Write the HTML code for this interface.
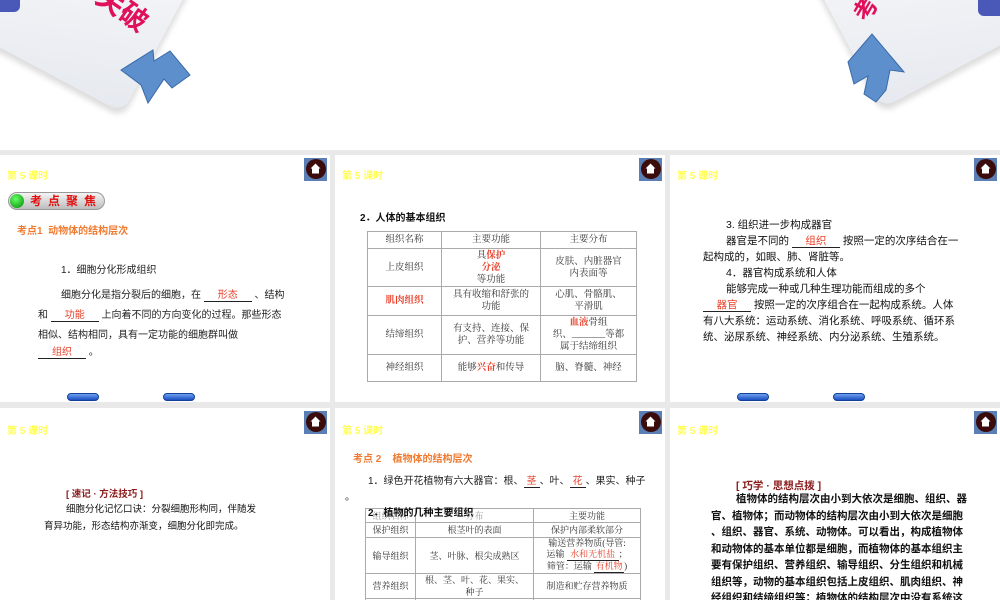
<!DOCTYPE html>
<html><head><meta charset="utf-8"><style>
*{margin:0;padding:0;box-sizing:border-box}
body{width:1000px;height:600px;overflow:hidden;background:#e9e9e9;font-family:"Liberation Sans","Noto Sans CJK SC",sans-serif;position:relative;color:#111}
.top{position:absolute;left:0;top:0;width:1000px;height:150px;background:#fff;overflow:hidden}
.s{position:absolute;background:#fff;overflow:hidden}
.a{position:absolute;white-space:nowrap}
.k{color:#ffff55;font-size:10px;font-weight:bold}
.home{position:absolute;width:23px;height:23px;background:#5b7fb5}
.home:after{content:"";position:absolute;left:2px;top:1px;width:20px;height:20px;border-radius:50%;background:#3a0c0c}
.home svg{position:absolute;left:6px;top:5px;z-index:2}
.nb{position:absolute;width:32px;height:8px;border-radius:4px;background:linear-gradient(#6fa0f0,#1a4fc0);border:1px solid #123f9a}
.t{font-size:10px;color:#222}
.r{color:#e8402a}
.u{display:inline-block;border-bottom:1px solid #222;text-align:center;line-height:11px}
table{position:absolute;border-collapse:collapse;font-family:"Liberation Serif","Noto Serif CJK SC",serif;font-size:9.5px;color:#333}
td{border:1px solid #aaa;text-align:center;vertical-align:middle;line-height:12px;padding:0 2px}
.p{font-size:10.5px;line-height:16.5px;color:#111}
</style></head><body>
<div class="top">
  <div style="position:absolute;left:-40px;top:-78px;width:210px;height:150px;background:linear-gradient(160deg,#fafbfc,#e6e9ef);border-radius:14px;transform:rotate(28deg);box-shadow:3px 5px 6px #ddd"></div>
  <div style="position:absolute;left:-10px;top:-10px;width:30px;height:22px;background:#4a58b8;border-radius:6px"></div>
  <div class="a" style="left:95px;top:-12px;font-size:28px;font-weight:bold;color:#e0105a;transform:rotate(35deg)">关破</div>
  <svg style="position:absolute;left:118px;top:45px" width="76" height="64" viewBox="0 0 76 64"><path d="M3 25 L35 5 L36 16 L52 6 L72 30 L54 43 L46 34 L30 58 L23 40 Z" fill="#5d8fcc" stroke="#3a6aa8"/></svg>
  <div style="position:absolute;left:835px;top:-80px;width:200px;height:150px;background:linear-gradient(200deg,#fafbfc,#e6e9ef);border-radius:14px;transform:rotate(-28deg);box-shadow:-3px 5px 6px #ddd"></div>
  <div style="position:absolute;left:978px;top:-6px;width:30px;height:22px;background:#4a58b8;border-radius:6px"></div>
  <div class="a" style="left:852px;top:-10px;font-size:24px;font-weight:bold;color:#e0105a;transform:rotate(-60deg)">考</div>
  <svg style="position:absolute;left:846px;top:32px" width="62" height="72" viewBox="0 0 62 72"><path d="M2 30 L26 2 L58 40 L44 38 L40 58 L30 70 L18 62 L22 44 L8 52 Z" fill="#5d8fcc" stroke="#3a6aa8"/></svg>
</div>

<!-- slide 1 -->
<div class="s" style="left:0;top:155px;width:330px;height:247px">
  <div class="a k" style="left:7px;top:12px">第 5 课时</div>
  <div class="home" style="left:304px;top:3px"><svg width="11" height="11" viewBox="0 0 11 11"><path d="M5.5 0.5 L10.5 5.5 L9 5.5 L9 10.5 L2 10.5 L2 5.5 L0.5 5.5 Z" fill="#fff"/></svg></div>
  <div style="position:absolute;left:8px;top:37px;width:97px;height:18px;border-radius:9px;background:linear-gradient(#f4f4f4,#bdbdbd);border:1px solid #999"></div>
  <div style="position:absolute;left:10px;top:39px;width:14px;height:14px;border-radius:50%;background:radial-gradient(circle at 40% 35%,#6f6,#080)"></div>
  <div class="a" style="left:30px;top:37px;font-size:12px;font-weight:bold;color:#e01010;letter-spacing:6px">考点聚焦</div>
  <div class="a" style="left:17px;top:67px;font-size:10px;font-weight:bold;color:#f07a30">考点1&nbsp; 动物体的结构层次</div>
  <div class="a t" style="left:61px;top:106px">1．细胞分化形成组织</div>
  <div class="a t" style="left:61px;top:131px">细胞分化是指分裂后的细胞，在 <span class="u r" style="width:48px">形态</span> 、结构</div>
  <div class="a t" style="left:38px;top:151px">和 <span class="u r" style="width:48px">功能</span> 上向着不同的方向变化的过程。那些形态</div>
  <div class="a t" style="left:38px;top:171px">相似、结构相同，具有一定功能的细胞群叫做</div>
  <div class="a t" style="left:38px;top:188px"><span class="u r" style="width:48px">组织</span> 。</div>
  <div class="nb" style="left:67px;top:238px"></div><div class="nb" style="left:163px;top:238px"></div>
</div>

<!-- slide 2 -->
<div class="s" style="left:335px;top:155px;width:330px;height:247px">
  <div class="a k" style="left:7px;top:12px">第 5 课时</div>
  <div class="home" style="left:304px;top:3px"><svg width="11" height="11" viewBox="0 0 11 11"><path d="M5.5 0.5 L10.5 5.5 L9 5.5 L9 10.5 L2 10.5 L2 5.5 L0.5 5.5 Z" fill="#fff"/></svg></div>
  <div class="a" style="left:25px;top:54px;font-size:10px;font-weight:bold">2．人体的基本组织</div>
  <table style="left:32px;top:76px;width:270px">
    <tr style="height:17px"><td style="width:74px">组织名称</td><td style="width:99px">主要功能</td><td>主要分布</td></tr>
    <tr style="height:38px"><td>上皮组织</td><td>具<span class="r" style="font-weight:bold">保护</span><br><span class="r" style="font-weight:bold">分泌</span><br>等功能</td><td>皮肤、内脏器官<br>内表面等</td></tr>
    <tr style="height:29px"><td><span class="r" style="font-weight:bold">肌肉组织</span></td><td>具有收缩和舒张的<br>功能</td><td>心肌、骨骼肌、<br>平滑肌</td></tr>
    <tr style="height:39px"><td>结缔组织</td><td>有支持、连接、保<br>护、营养等功能</td><td><span class="r" style="font-weight:bold">血液</span>骨组<br>织、_______等都<br>属于结缔组织</td></tr>
    <tr style="height:27px"><td>神经组织</td><td>能够<span class="r" style="font-weight:bold">兴奋</span>和传导</td><td>脑、脊髓、神经</td></tr>
  </table>
</div>

<!-- slide 3 -->
<div class="s" style="left:670px;top:155px;width:330px;height:247px">
  <div class="a k" style="left:7px;top:12px">第 5 课时</div>
  <div class="home" style="left:304px;top:3px"><svg width="11" height="11" viewBox="0 0 11 11"><path d="M5.5 0.5 L10.5 5.5 L9 5.5 L9 10.5 L2 10.5 L2 5.5 L0.5 5.5 Z" fill="#fff"/></svg></div>
  <div class="a p" style="left:56px;top:62px">3. 组织进一步构成器官</div>
  <div class="a p" style="left:56px;top:78px">器官是不同的 <span class="u r" style="width:48px">组织</span> 按照一定的次序结合在一</div>
  <div class="a p" style="left:33px;top:94px">起构成的，如眼、肺、肾脏等。</div>
  <div class="a p" style="left:56px;top:110px">4．器官构成系统和人体</div>
  <div class="a p" style="left:56px;top:126px">能够完成一种或几种生理功能而组成的多个</div>
  <div class="a p" style="left:33px;top:142px"><span class="u r" style="width:48px">器官</span> 按照一定的次序组合在一起构成系统。人体</div>
  <div class="a p" style="left:33px;top:158px">有八大系统：运动系统、消化系统、呼吸系统、循环系</div>
  <div class="a p" style="left:33px;top:174px">统、泌尿系统、神经系统、内分泌系统、生殖系统。</div>
  <div class="nb" style="left:67px;top:238px"></div><div class="nb" style="left:163px;top:238px"></div>
</div>

<!-- slide 4 -->
<div class="s" style="left:0;top:408px;width:330px;height:192px">
  <div class="a k" style="left:7px;top:14px">第 5 课时</div>
  <div class="home" style="left:304px;top:3px"><svg width="11" height="11" viewBox="0 0 11 11"><path d="M5.5 0.5 L10.5 5.5 L9 5.5 L9 10.5 L2 10.5 L2 5.5 L0.5 5.5 Z" fill="#fff"/></svg></div>
  <div class="a" style="left:66px;top:78px;font-size:9.5px;font-weight:bold;color:#8b1a1a">[ 速记 · 方法技巧 ]</div>
  <div class="a" style="left:66px;top:93px;font-size:9.5px">细胞分化记忆口诀：分裂细胞形构同，伴随发</div>
  <div class="a" style="left:44px;top:110px;font-size:9.5px">育异功能，形态结构亦渐变，细胞分化即完成。</div>
</div>

<!-- slide 5 -->
<div class="s" style="left:335px;top:408px;width:330px;height:192px">
  <div class="a k" style="left:7px;top:14px">第 5 课时</div>
  <div class="home" style="left:304px;top:3px"><svg width="11" height="11" viewBox="0 0 11 11"><path d="M5.5 0.5 L10.5 5.5 L9 5.5 L9 10.5 L2 10.5 L2 5.5 L0.5 5.5 Z" fill="#fff"/></svg></div>
  <div class="a" style="left:18px;top:42px;font-size:10px;font-weight:bold;color:#f07a30">考点 2&nbsp;&nbsp;&nbsp; 植物体的结构层次</div>
  <div class="a t" style="left:33px;top:64px">1．绿色开花植物有六大器官：根、<span class="u r" style="width:16px">茎</span>、叶、<span class="u r" style="width:16px">花</span>、果实、种子</div>
  <div class="a t" style="left:10px;top:80px">。</div>
  <table style="left:30px;top:100px;width:276px;font-size:9px">
    <tr style="height:14px"><td style="width:50px;color:#999">组织名称</td><td style="width:118px;color:#999">分布</td><td>主要功能</td></tr>
    <tr style="height:15px"><td>保护组织</td><td>根茎叶的表面</td><td>保护内部柔软部分</td></tr>
    <tr style="height:36px"><td>输导组织</td><td>茎、叶脉、根尖成熟区</td><td style="line-height:11px">输送营养物质(导管:<br>运输 <span class="u r" style="width:52px">水和无机盐</span>；<br>筛管：运输 <span class="u r" style="width:30px">有机物</span>)</td></tr>
    <tr style="height:25px"><td>营养组织</td><td>根、茎、叶、花、果实、<br>种子</td><td>制造和贮存营养物质</td></tr>
    <tr style="height:12px"><td></td><td></td><td></td></tr>
  </table>
  <div class="a" style="left:33px;top:96px;font-size:10px;font-weight:bold">2．植物的几种主要组织</div>
</div>

<!-- slide 6 -->
<div class="s" style="left:670px;top:408px;width:330px;height:192px">
  <div class="a k" style="left:7px;top:14px">第 5 课时</div>
  <div class="home" style="left:304px;top:3px"><svg width="11" height="11" viewBox="0 0 11 11"><path d="M5.5 0.5 L10.5 5.5 L9 5.5 L9 10.5 L2 10.5 L2 5.5 L0.5 5.5 Z" fill="#fff"/></svg></div>
  <div class="a" style="left:66px;top:70px;font-size:10.5px;font-weight:bold;color:#8b1a1a">[ 巧学 · 思想点拨 ]</div>
  <div class="a p" style="left:66px;top:83px;font-weight:600">植物体的结构层次由小到大依次是细胞、组织、器</div>
  <div class="a p" style="left:41px;top:100px;font-weight:600">官、植物体；而动物体的结构层次由小到大依次是细胞</div>
  <div class="a p" style="left:41px;top:116px;font-weight:600">、组织、器官、系统、动物体。可以看出，构成植物体</div>
  <div class="a p" style="left:41px;top:133px;font-weight:600">和动物体的基本单位都是细胞，而植物体的基本组织主</div>
  <div class="a p" style="left:41px;top:149px;font-weight:600">要有保护组织、营养组织、输导组织、分生组织和机械</div>
  <div class="a p" style="left:41px;top:166px;font-weight:600">组织等，动物的基本组织包括上皮组织、肌肉组织、神</div>
  <div class="a p" style="left:41px;top:182px;font-weight:600">经组织和结缔组织等；植物体的结构层次中没有系统这</div>
</div>
</body></html>
